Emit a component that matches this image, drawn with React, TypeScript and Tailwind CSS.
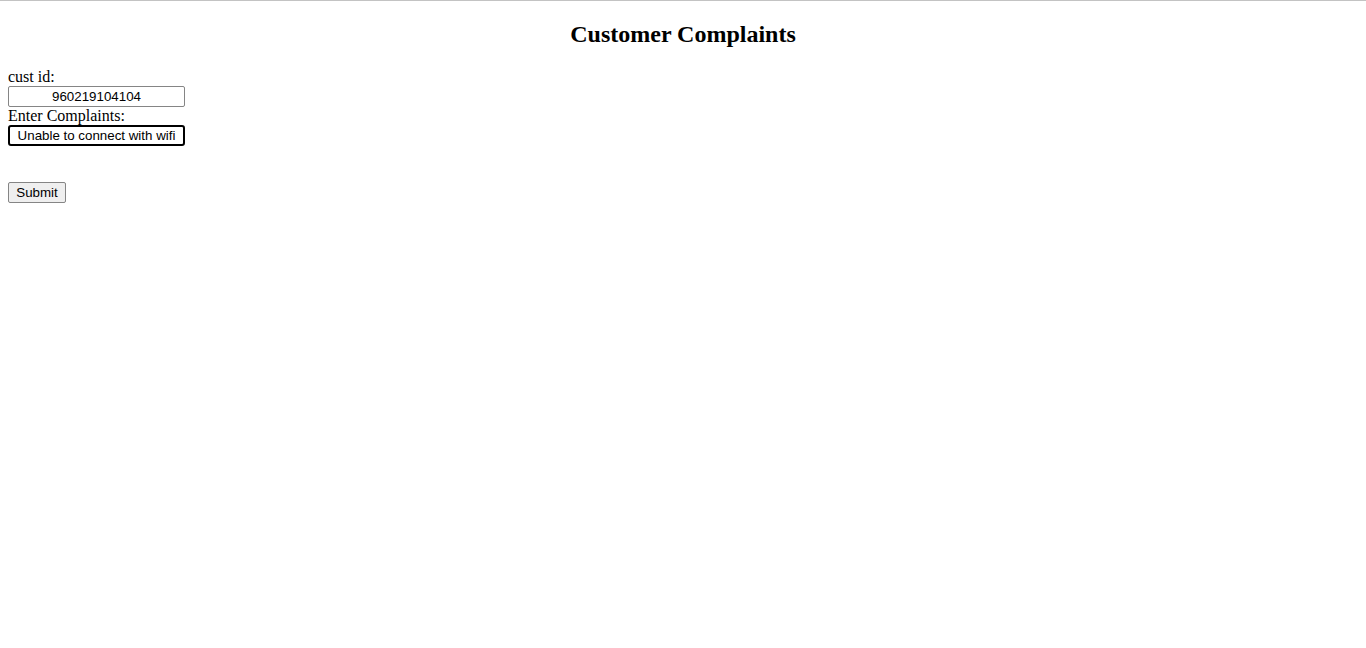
export default function App() {
  return (
    <div className="min-h-screen bg-white text-black border-t border-[#c3c3c3] font-['Liberation_Serif',serif]">
      <div className="px-2">
        <h2 className="text-center text-[24px] leading-[28px] font-bold mt-[19px] mb-[20px]">
          Customer Complaints
        </h2>
        <form className="flex flex-col items-start" onSubmit={(e) => e.preventDefault()}>
          <label htmlFor="custid" className="text-[16px] leading-[18px]">cust id:</label>
          <input
            id="custid"
            defaultValue="960219104104"
            className="w-[177px] h-[21px] border border-[#858585] rounded-[2px] text-center text-[13.333px] font-['Liberation_Sans',sans-serif] outline-none"
          />
          <label htmlFor="complaint" className="text-[16px] leading-[18px]">Enter Complaints:</label>
          <input
            id="complaint"
            defaultValue="Unable to connect with wifi"
            className="w-[177px] h-[21px] border-2 border-black rounded-[3px] text-center text-[13.333px] font-['Liberation_Sans',sans-serif] outline-none"
          />
          <div className="h-[36px]" />
          <button
            type="submit"
            className="w-[58px] h-[21px] bg-[#efefef] border border-[#858585] rounded-[2px] text-[13.333px] leading-none font-['Liberation_Sans',sans-serif]"
          >
            Submit
          </button>
        </form>
      </div>
    </div>
  )
}
